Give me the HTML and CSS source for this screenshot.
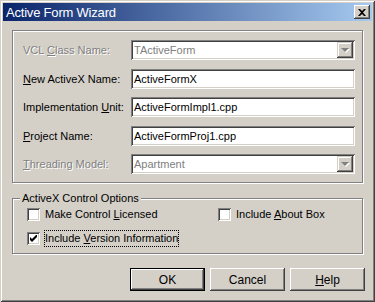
FILE: index.html
```html
<!DOCTYPE html>
<html lang="en">
<head>
    <meta charset="UTF-8">
    <title>Active Form Wizard</title>
    <link rel="stylesheet" href="styles.css">
</head>
<body>
    <div class="window">
        <div class="titlebar">
            <span class="title">Active Form Wizard</span>
            <span class="close-btn">
                <svg width="8" height="7" viewBox="0 0 8 7"><path d="M0 0h2l2 2 2-2h2L5 3.5 8 7H6L4 5 2 7H0l3-3.5z" fill="#000"/></svg>
            </span>
        </div>

        <div class="content">
            <div class="fields">
                <span class="label disabled">VCL <u>C</u>lass Name:</span>
                <div class="combo disabled">
                    <span class="combo-text">TActiveForm</span>
                    <span class="drop-btn"><span class="arrow"></span></span>
                </div>

                <span class="label"><u>N</u>ew ActiveX Name:</span>
                <div class="edit">ActiveFormX</div>

                <span class="label">Implementation <u>U</u>nit:</span>
                <div class="edit">ActiveFormImpl1.cpp</div>

                <span class="label"><u>P</u>roject Name:</span>
                <div class="edit">ActiveFormProj1.cpp</div>

                <span class="label disabled"><u>T</u>hreading Model:</span>
                <div class="combo disabled">
                    <span class="combo-text">Apartment</span>
                    <span class="drop-btn"><span class="arrow"></span></span>
                </div>
            </div>

            <div class="options">
                <span class="options-title">ActiveX Control Options</span>
                <div class="options-grid">
                    <label class="check">
                        <span class="box"></span>
                        <span>Make Control <u>L</u>icensed</span>
                    </label>
                    <label class="check">
                        <span class="box"></span>
                        <span>Include <u>A</u>bout Box</span>
                    </label>
                    <label class="check">
                        <span class="box">
                            <svg width="7" height="7" viewBox="0 0 7 7"><path d="M0 2v3l2 2 5-5V-1L2 4z" fill="#000"/></svg>
                        </span>
                        <span class="focused">Include <u>V</u>ersion Information</span>
                    </label>
                </div>
            </div>

            <div class="buttons">
                <button class="btn default">OK</button>
                <button class="btn">Cancel</button>
                <button class="btn"><u>H</u>elp</button>
            </div>
        </div>
    </div>
</body>
</html>
```

FILE: styles.css
```css
* {
    margin: 0;
    padding: 0;
    box-sizing: border-box;
}

body {
    background: #d4d0c8;
    font-family: 'Liberation Sans', Arial, sans-serif;
    font-size: 11px;
    color: #000;
}

u {
    text-decoration: underline;
    text-underline-offset: 1px;
}

.window {
    width: 375px;
    height: 302px;
    padding: 3px;
    background: #d4d0c8;
    box-shadow: inset 1px 1px #d4d0c8, inset -1px -1px #404040, inset 2px 2px #fff, inset -2px -2px #808080;
}

.titlebar {
    height: 18px;
    display: flex;
    align-items: center;
    justify-content: space-between;
    padding: 0 2px 0 3px;
    background: linear-gradient(to right, #0a246a, #a6caf0);
}

.title {
    color: #fff;
    font-size: 13px;
    letter-spacing: -0.2px;
}

.close-btn {
    width: 16px;
    height: 14px;
    display: flex;
    align-items: center;
    justify-content: center;
    background: #d4d0c8;
    box-shadow: inset -1px -1px #404040, inset 1px 1px #fff, inset -2px -2px #808080;
}

.content {
    padding: 9px 7px 0 9px;
}

.fields {
    height: 153px;
    margin-right: 2px;
    padding: 9px 7px 0 10px;
    border: 1px solid #808080;
    box-shadow: inset 1px 1px #fff, 1px 1px #fff;
    display: grid;
    grid-template-columns: 108px 1fr;
    grid-template-rows: repeat(5, 20px);
    row-gap: 8.5px;
    align-items: center;
}

.label.disabled {
    color: #808080;
    text-shadow: 1px 1px #fff;
}

.edit,
.combo {
    height: 20px;
    display: flex;
    align-items: center;
    padding: 0 2px 0 3px;
    background: #fff;
    box-shadow: inset 1px 1px #808080, inset -1px -1px #fff, inset 2px 2px #404040, inset -2px -2px #d4d0c8;
}

.combo {
    justify-content: space-between;
}

.combo.disabled .combo-text {
    color: #808080;
}

.drop-btn {
    width: 16px;
    height: 16px;
    display: flex;
    align-items: center;
    justify-content: center;
    background: #d4d0c8;
    box-shadow: inset -1px -1px #404040, inset 1px 1px #d4d0c8, inset -2px -2px #808080, inset 2px 2px #fff;
}

.arrow {
    width: 0;
    height: 0;
    border-left: 4px solid transparent;
    border-right: 4px solid transparent;
    border-top: 4px solid #808080;
    filter: drop-shadow(1px 1px 0 #fff);
}

.options {
    height: 56px;
    margin: 15px 2px 0 0;
    border: 1px solid #808080;
    box-shadow: inset 1px 1px #fff, 1px 1px #fff;
}

.options-title {
    display: table;
    margin: -8px 0 0 7px;
    padding: 0 2px;
    line-height: 14px;
    background: #d4d0c8;
}

.options-grid {
    margin: 3px 0 0 14px;
    display: grid;
    grid-template-columns: 191px 1fr;
    grid-template-rows: 13px 13px;
    row-gap: 11px;
}

.check {
    display: flex;
    align-items: center;
    gap: 5px;
    line-height: 13px;
}

.box {
    width: 13px;
    height: 13px;
    flex: none;
    display: flex;
    align-items: center;
    justify-content: center;
    background: #fff;
    box-shadow: inset 1px 1px #808080, inset -1px -1px #fff, inset 2px 2px #404040, inset -2px -2px #d4d0c8;
}

.focused {
    outline: 1px dotted #000;
    padding: 1px 0;
}

.buttons {
    margin-top: 14px;
    display: flex;
    justify-content: flex-end;
    gap: 5px;
}

.btn {
    width: 75px;
    height: 23px;
    border: none;
    background: #d4d0c8;
    font-family: inherit;
    font-size: 12px;
    color: #000;
    box-shadow: inset -1px -1px #404040, inset 1px 1px #fff, inset -2px -2px #808080, inset 2px 2px #d4d0c8;
}

.btn.default {
    box-shadow: inset 0 0 0 1px #000, inset -2px -2px #404040, inset 2px 2px #fff, inset -3px -3px #808080;
}
```
